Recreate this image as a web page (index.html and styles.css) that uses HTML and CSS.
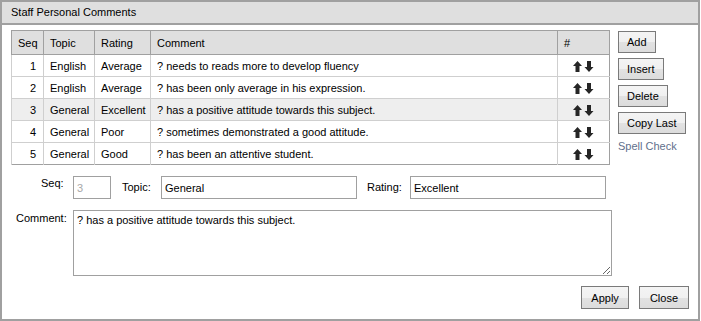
FILE: index.html
```html
<!DOCTYPE html>
<html>
<head>
<meta charset="utf-8">
<link rel="stylesheet" href="styles.css">
</head>
<body>
<div class="dialog">
  <div class="titlebar">Staff Personal Comments</div>
  <div class="content">
    <div class="top">
      <table class="grid">
        <colgroup>
          <col class="c-seq"><col class="c-topic"><col class="c-rating"><col class="c-comment"><col class="c-move">
        </colgroup>
        <thead>
          <tr><th>Seq</th><th>Topic</th><th>Rating</th><th>Comment</th><th>#</th></tr>
        </thead>
        <tbody>
          <tr><td class="num">1</td><td>English</td><td>Average</td><td>? needs to reads more to develop fluency</td><td class="mv"><span class="arrows"><svg width="21" height="11" viewBox="0 0 21 11"><path d="M4.5 0 L9 5 L6.5 5 L6.5 11 L2.5 11 L2.5 5 L0 5 Z" fill="#262626"/><path d="M16 11 L20.5 6 L18 6 L18 0 L14 0 L14 6 L11.5 6 Z" fill="#262626"/></svg></span></td></tr>
          <tr><td class="num">2</td><td>English</td><td>Average</td><td>? has been only average in his expression.</td><td class="mv"><span class="arrows"><svg width="21" height="11" viewBox="0 0 21 11"><path d="M4.5 0 L9 5 L6.5 5 L6.5 11 L2.5 11 L2.5 5 L0 5 Z" fill="#262626"/><path d="M16 11 L20.5 6 L18 6 L18 0 L14 0 L14 6 L11.5 6 Z" fill="#262626"/></svg></span></td></tr>
          <tr class="sel"><td class="num">3</td><td>General</td><td>Excellent</td><td>? has a positive attitude towards this subject.</td><td class="mv"><span class="arrows"><svg width="21" height="11" viewBox="0 0 21 11"><path d="M4.5 0 L9 5 L6.5 5 L6.5 11 L2.5 11 L2.5 5 L0 5 Z" fill="#262626"/><path d="M16 11 L20.5 6 L18 6 L18 0 L14 0 L14 6 L11.5 6 Z" fill="#262626"/></svg></span></td></tr>
          <tr><td class="num">4</td><td>General</td><td>Poor</td><td>? sometimes demonstrated a good attitude.</td><td class="mv"><span class="arrows"><svg width="21" height="11" viewBox="0 0 21 11"><path d="M4.5 0 L9 5 L6.5 5 L6.5 11 L2.5 11 L2.5 5 L0 5 Z" fill="#262626"/><path d="M16 11 L20.5 6 L18 6 L18 0 L14 0 L14 6 L11.5 6 Z" fill="#262626"/></svg></span></td></tr>
          <tr><td class="num">5</td><td>General</td><td>Good</td><td>? has been an attentive student.</td><td class="mv"><span class="arrows"><svg width="21" height="11" viewBox="0 0 21 11"><path d="M4.5 0 L9 5 L6.5 5 L6.5 11 L2.5 11 L2.5 5 L0 5 Z" fill="#262626"/><path d="M16 11 L20.5 6 L18 6 L18 0 L14 0 L14 6 L11.5 6 Z" fill="#262626"/></svg></span></td></tr>
        </tbody>
      </table>
      <div class="side">
        <button class="btn">Add</button>
        <button class="btn">Insert</button>
        <button class="btn">Delete</button>
        <button class="btn">Copy Last</button>
        <a class="spell">Spell Check</a>
      </div>
    </div>
    <div class="fields">
      <label class="lbl lbl-seq">Seq:</label>
      <input class="inp inp-seq" value="3" disabled>
      <label class="lbl lbl-topic">Topic:</label>
      <input class="inp inp-wide" value="General">
      <label class="lbl lbl-rating">Rating:</label>
      <input class="inp inp-wide" value="Excellent">
    </div>
    <div class="comment-row">
      <label class="lbl lbl-comment">Comment:</label>
      <textarea class="txt">? has a positive attitude towards this subject.</textarea>
    </div>
    <div class="footer">
      <button class="btn btn-foot">Apply</button>
      <button class="btn btn-foot btn-close">Close</button>
    </div>
  </div>
</div>
</body>
</html>
```

FILE: styles.css
```css
html, body {
  margin: 0;
  padding: 0;
  background: #ffffff;
}
body {
  font-family: "Liberation Sans", Arial, sans-serif;
  font-size: 11px;
  color: #000;
}
.dialog {
  box-sizing: border-box;
  width: 700px;
  height: 321px;
  border: 2px solid #a0a0a0;
  background: #fff;
}
.titlebar {
  height: 21px;
  line-height: 21px;
  background: #dfdfdf;
  border-bottom: 2px solid #a0a0a0;
  padding-left: 9px;
  font-size: 11px;
}
.content {
  padding: 5px 9px 0 9px;
}
.top {
  display: flex;
  gap: 8px;
  align-items: flex-start;
}
.grid {
  border-collapse: collapse;
  table-layout: fixed;
  width: 598px;
  border: 1px solid #a0a0a0;
}
.c-seq { width: 32px; }
.c-topic { width: 51px; }
.c-rating { width: 56px; }
.c-comment { width: 407px; }
.c-move { width: 52px; }
.grid th {
  background: #dfdfdf;
  font-weight: normal;
  text-align: left;
  height: 23px;
  padding: 0 0 0 6px;
  border-left: 1px solid #a0a0a0;
  border-bottom: 1px solid #a0a0a0;
  white-space: nowrap;
}
.grid td {
  height: 21px;
  padding: 0 0 0 6px;
  border-left: 1px solid #cfcfcf;
  border-top: 1px solid #cfcfcf;
  white-space: nowrap;
  overflow: hidden;
}
.grid thead + tbody tr:first-child td { border-top: none; }
.grid td.num {
  text-align: right;
  padding: 0 7px 0 0;
}
.grid td.mv {
  padding: 0;
  text-align: center;
}
.arrows {
  display: inline-block;
  vertical-align: middle;
  line-height: 0;
}
.grid tr.sel td { background: #eeeeee; }
.side {
  display: flex;
  flex-direction: column;
  align-items: flex-start;
  gap: 5px;
  padding-top: 1px;
}
.btn {
  font-family: "Liberation Sans", Arial, sans-serif;
  font-size: 11px;
  color: #000;
  height: 22px;
  padding: 0 8px;
  border: 1px solid #7a7a7a;
  border-radius: 0;
  background: linear-gradient(#f4f4f4, #f0f0f0 50%, #e2e2e2 51%, #dcdcdc);
  margin: 0;
}
.spell {
  color: #5f6f8c;
  margin-top: 1px;
  line-height: 13px;
}
.fields {
  display: flex;
  align-items: center;
  margin-top: 11px;
  padding-left: 30px;
}
.lbl {
  line-height: 13px;
}
.lbl-seq {
  width: 32px;
  align-self: flex-start;
  margin-top: 1px;
}
.lbl-topic { width: 39px; }
.lbl-rating { width: 43px; }
.inp {
  box-sizing: border-box;
  height: 23px;
  border: 1px solid #a0a0a0;
  border-radius: 0;
  padding: 0 3px;
  font-family: "Liberation Sans", Arial, sans-serif;
  font-size: 11px;
  color: #000;
  background: #fff;
  margin: 0;
  outline: none;
}
.inp-seq {
  width: 38px;
  margin-right: 11px;
  color: #a8a8a8;
}
.inp-wide {
  width: 196px;
  margin-right: 10px;
}
.comment-row {
  display: flex;
  margin-top: 11px;
  padding-left: 5px;
}
.lbl-comment {
  width: 57px;
  padding-top: 2px;
}
.txt {
  box-sizing: border-box;
  width: 539px;
  height: 66px;
  border: 1px solid #a0a0a0;
  border-radius: 0;
  padding: 3px;
  font-family: "Liberation Sans", Arial, sans-serif;
  font-size: 11px;
  margin: 0;
  resize: both;
  outline: none;
}
.footer {
  display: flex;
  justify-content: flex-end;
  gap: 10px;
  margin-top: 10px;
}
.btn-foot {
  height: 23px;
  padding: 0 9px;
}
.btn-close {
  padding: 0 10px;
}
```
